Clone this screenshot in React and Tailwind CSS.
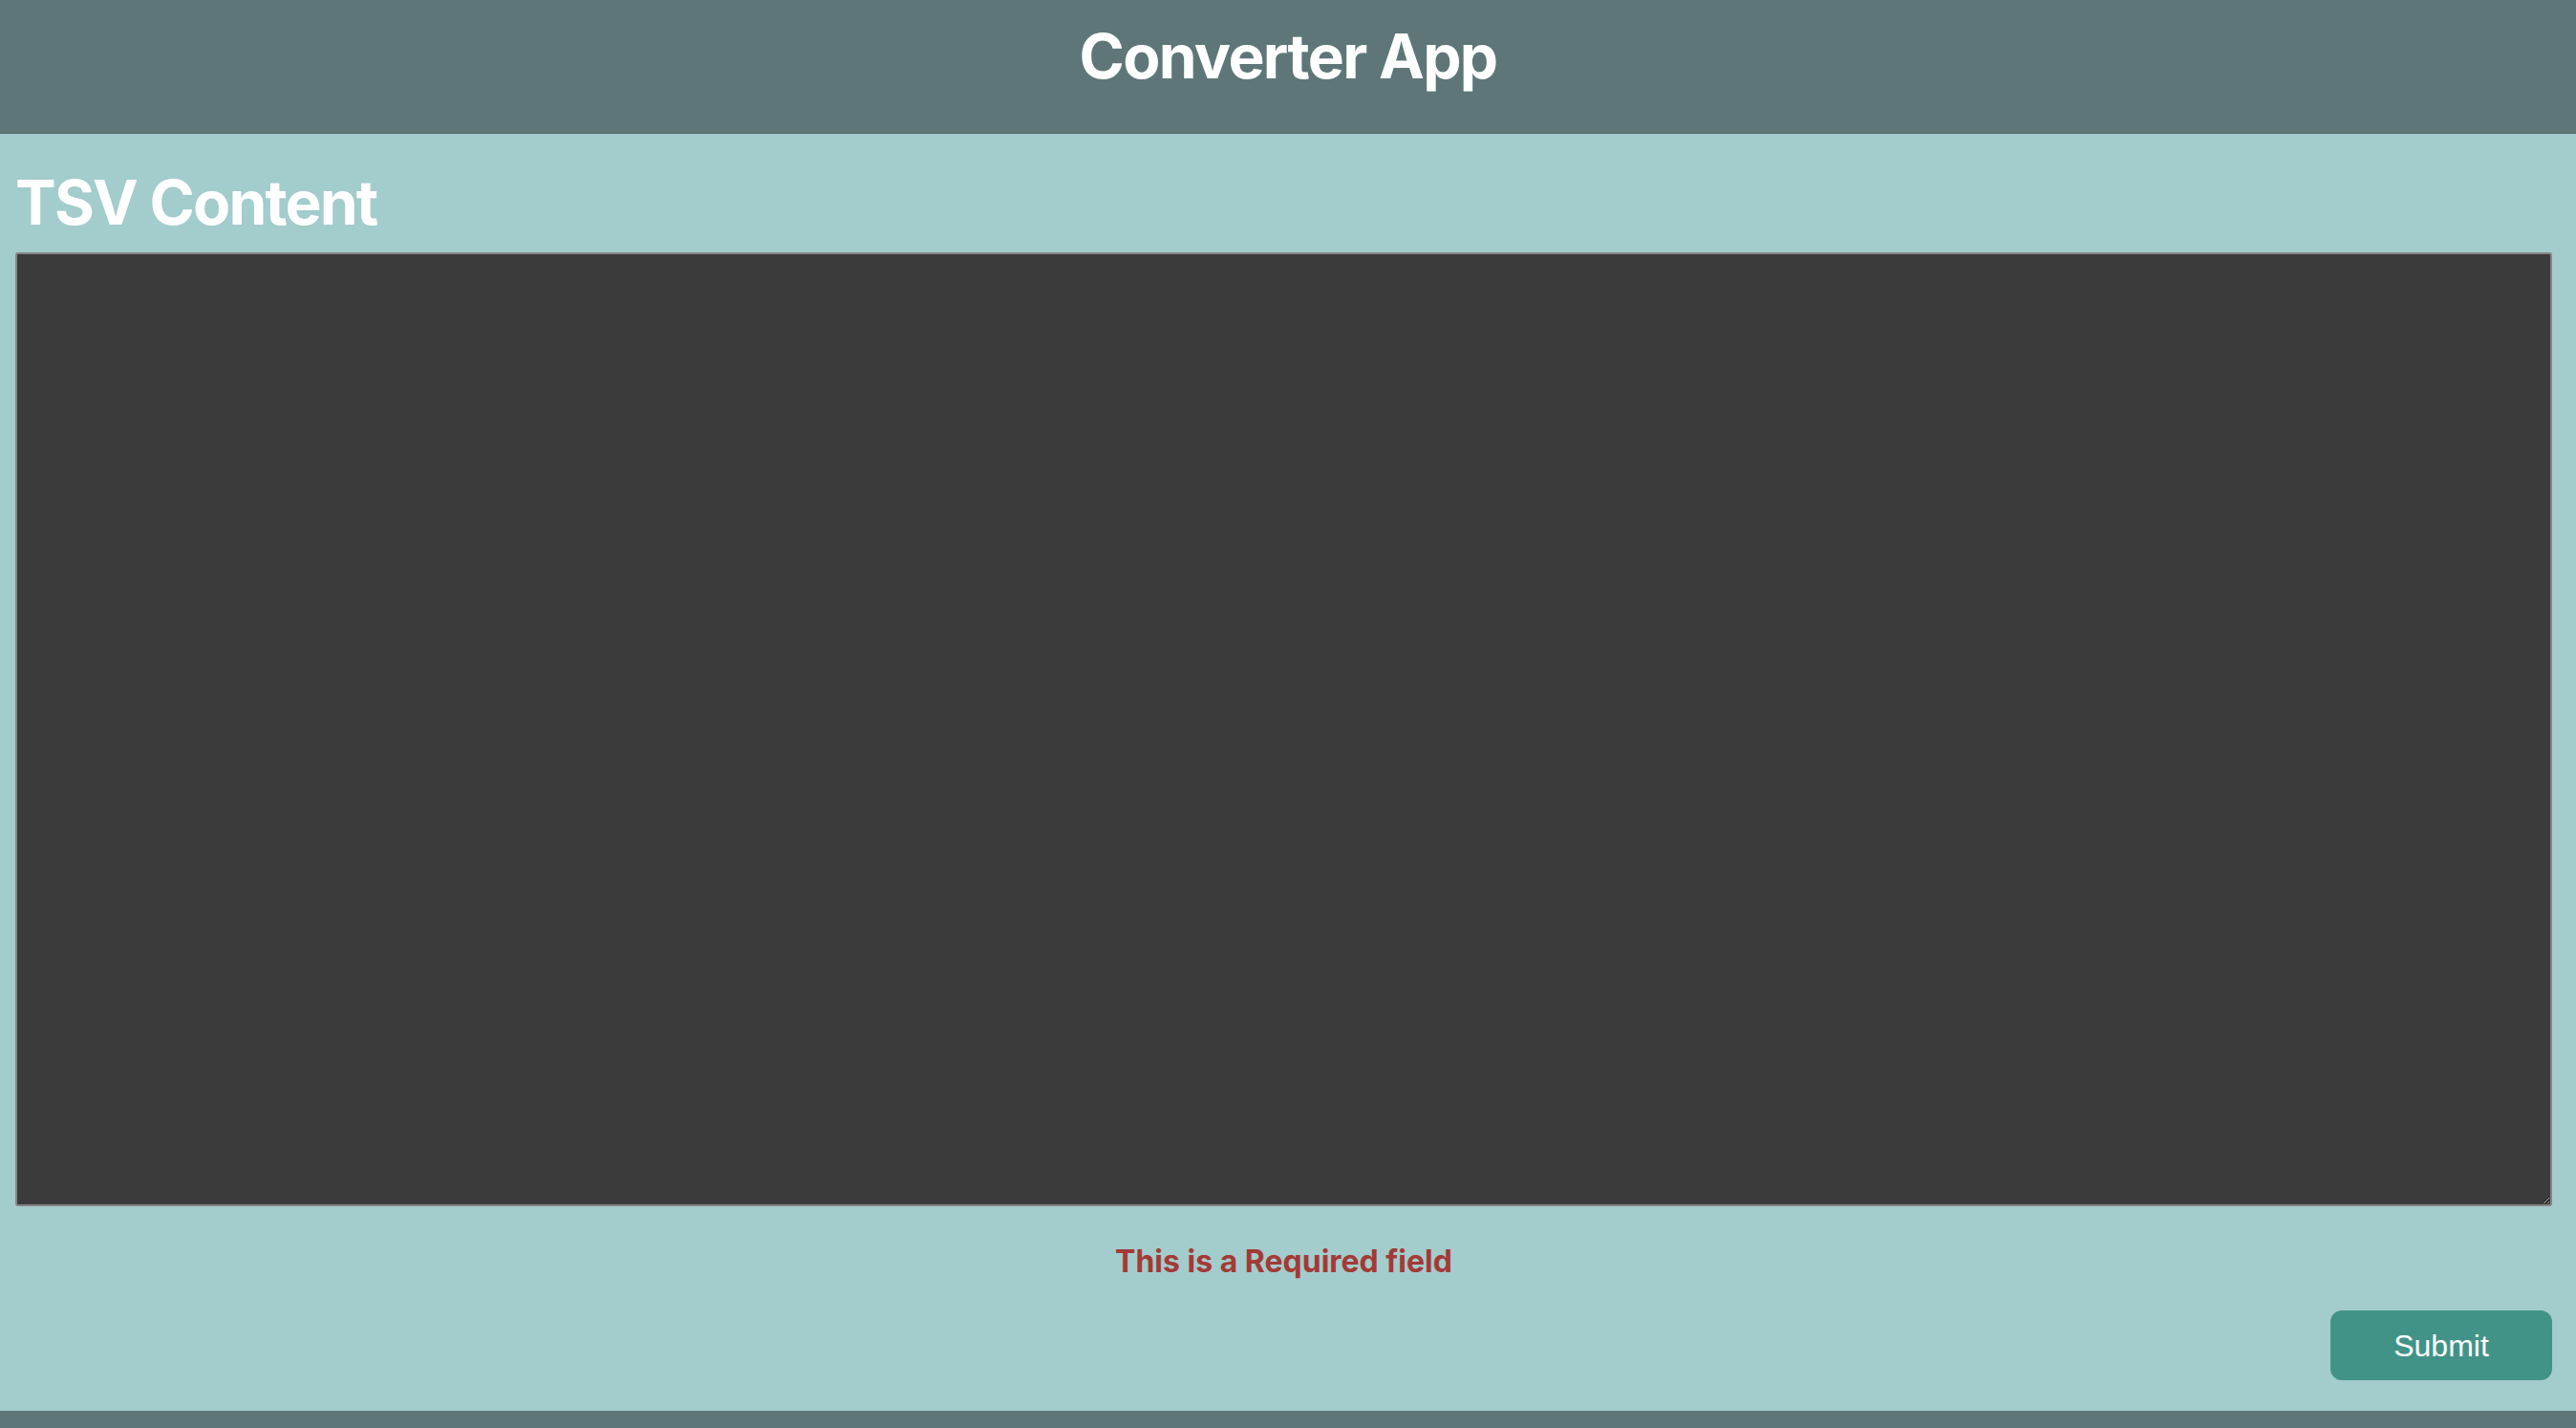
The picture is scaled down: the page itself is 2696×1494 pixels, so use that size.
import React from "react";

export default function App() {
  return (
    <div className="flex h-[1494px] flex-col bg-[#a3cccc] font-['Inter','Noto_Sans',sans-serif]">
      <header className="flex h-[140px] shrink-0 justify-center border-b border-[#55696a] bg-[#5e7677] pt-[20px]">
        <h1 className="text-[64px] font-bold leading-[77px] tracking-[-0.026em] text-white">Converter App</h1>
      </header>
      <main className="flex flex-1 flex-col pl-[16px] pr-[25px] pt-[33px]">
        <h2 className="text-[64px] font-bold leading-[77px] tracking-[-0.028em] text-white">TSV Content</h2>
        <textarea
          className="mt-[14px] h-[998px] w-full resize rounded-[3px] border-2 border-[#858585] bg-[#3b3b3b] text-white outline-none [color-scheme:dark]"
          aria-label="TSV Content"
        />
        <p className="mt-[39px] text-center text-[32px] font-bold leading-[38px] text-[#a33a36]">
          This is a Required field
        </p>
        <div className="mt-[32px] flex justify-end">
          <button className="h-[73px] w-[232px] rounded-[12px] bg-[#429387] font-['Liberation_Sans',Arial,sans-serif] text-[32px] text-white">
            Submit
          </button>
        </div>
      </main>
      <footer className="h-[18px] shrink-0 bg-[#5e7677]" />
    </div>
  );
}
